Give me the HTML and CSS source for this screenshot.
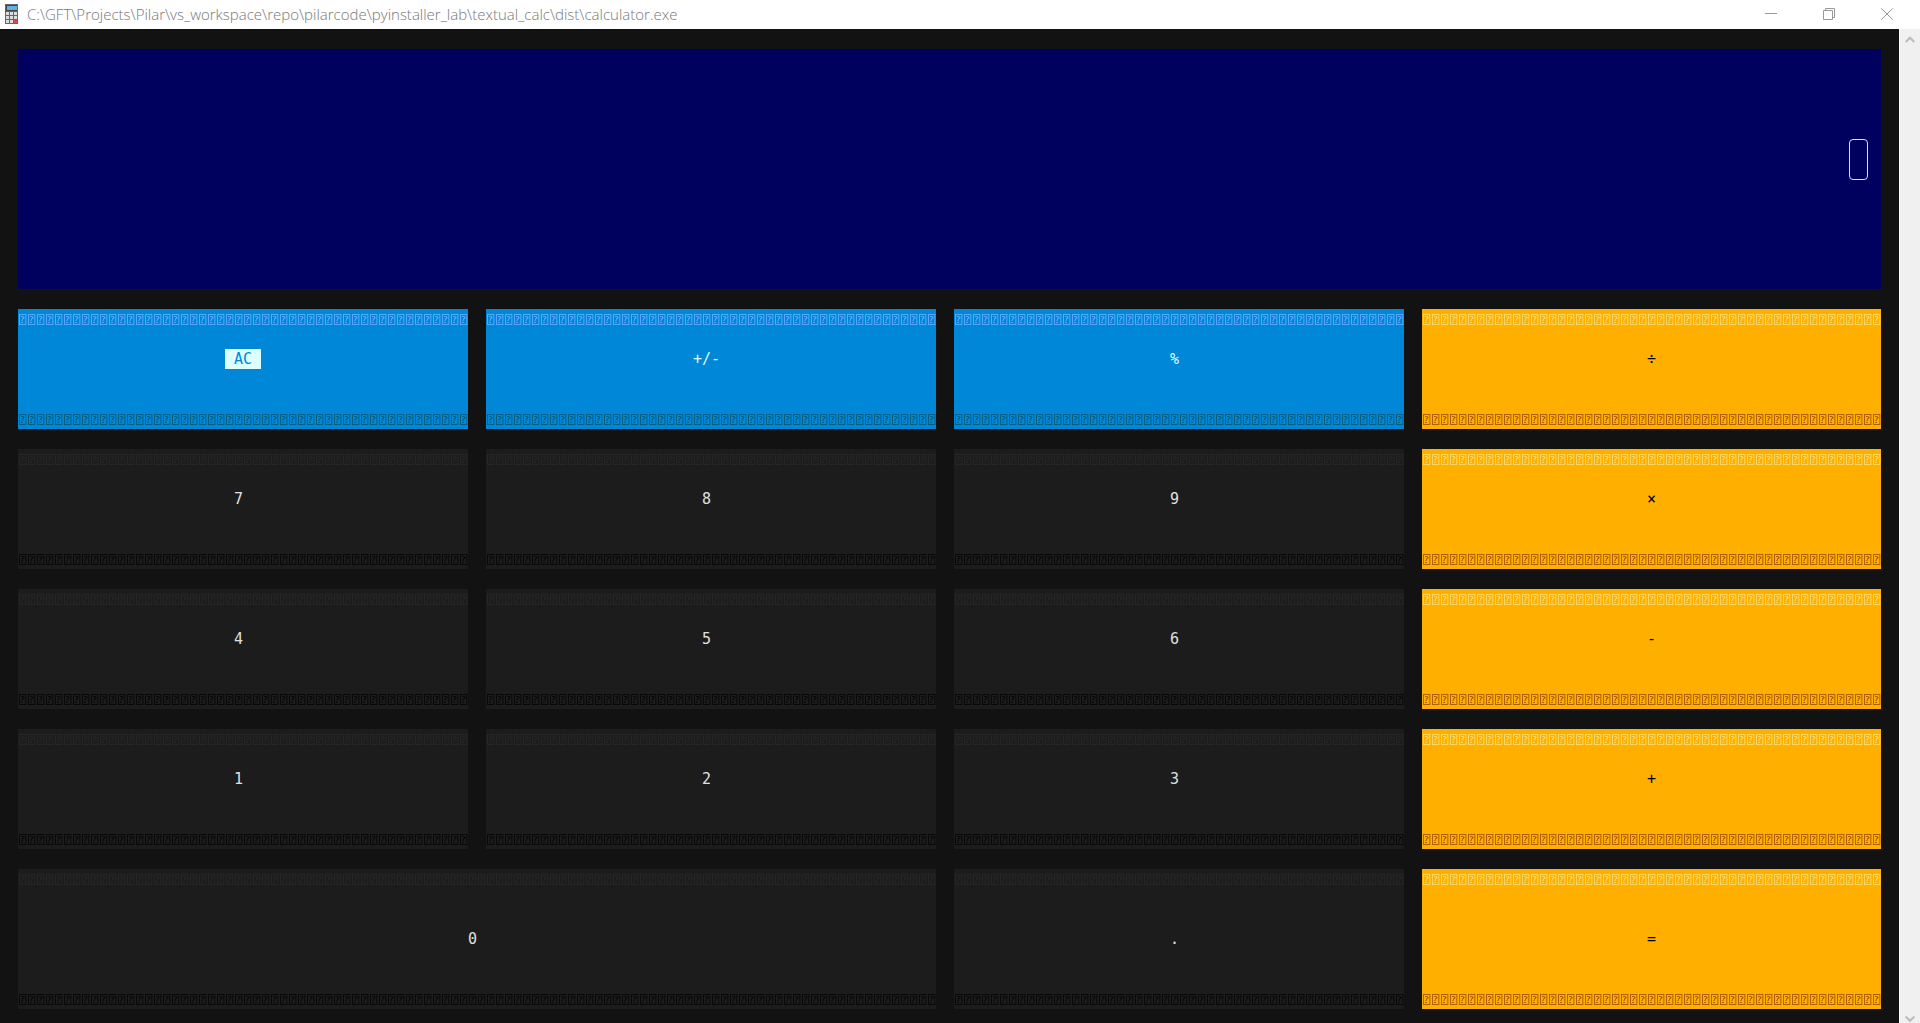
FILE: index.html
```html
<!DOCTYPE html>
<html lang="en">
<head>
<meta charset="utf-8">
<title>calculator.exe</title>
<link rel="stylesheet" href="styles.css">
</head>
<body>
<header class="titlebar">
  <svg class="app-icon" width="13" height="20" viewBox="0 0 13 20" aria-hidden="true">
    <rect width="13" height="20" fill="#666"/>
    <rect x="1" y="1" width="11" height="6" fill="#444"/>
    <rect x="2" y="2" width="10" height="4" fill="#62aee6"/>
    <path d="M1 8h3v3H1zM5 8h3v3H5zM9 8h3v3H9zM1 12h3v3H1zM5 12h3v3H5zM9 12h3v3H9zM1 16h3v3H1zM5 16h3v3H5z" fill="#ddd"/>
    <rect x="9" y="16" width="3" height="3" fill="#e04848"/>
  </svg>
  <span class="title">C:\GFT\Projects\Pilar\vs_workspace\repo\pilarcode\pyinstaller_lab\textual_calc\dist\calculator.exe</span>
  <div class="window-controls">
    <button class="window-button" type="button" aria-label="Minimize"><svg width="12" height="12" viewBox="0 0 12 12"><path d="M0 5.5h12"/></svg></button>
    <button class="window-button" type="button" aria-label="Restore"><svg width="12" height="12" viewBox="0 0 12 12"><path d="M.5 2.5h9v9h-9zM2.5 2.500v-2h9v9h-2"/></svg></button>
    <button class="window-button" type="button" aria-label="Close"><svg width="12" height="12" viewBox="0 0 12 12"><path d="M.3.3l11.400 11.400M11.700.3L.3 11.700"/></svg></button>
  </div>
</header>
<div class="terminal">
  <main class="calculator">
    <output class="display"><span class="digit" role="img" aria-label="0"></span></output>
    <button class="key key-blue key-focused" type="button"><span class="label">AC</span></button>
    <button class="key key-blue" type="button"><span class="label">+/-</span></button>
    <button class="key key-blue" type="button"><span class="label">%</span></button>
    <button class="key key-orange" type="button"><span class="label">÷</span></button>
    <button class="key" type="button"><span class="label">7</span></button>
    <button class="key" type="button"><span class="label">8</span></button>
    <button class="key" type="button"><span class="label">9</span></button>
    <button class="key key-orange" type="button"><span class="label">×</span></button>
    <button class="key" type="button"><span class="label">4</span></button>
    <button class="key" type="button"><span class="label">5</span></button>
    <button class="key" type="button"><span class="label">6</span></button>
    <button class="key key-orange" type="button"><span class="label">-</span></button>
    <button class="key" type="button"><span class="label">1</span></button>
    <button class="key" type="button"><span class="label">2</span></button>
    <button class="key" type="button"><span class="label">3</span></button>
    <button class="key key-orange" type="button"><span class="label">+</span></button>
    <button class="key key-tall key-wide" type="button"><span class="label">0</span></button>
    <button class="key key-tall" type="button"><span class="label">.</span></button>
    <button class="key key-tall key-orange" type="button"><span class="label">=</span></button>
  </main>
  <div class="scrollbar">
    <button class="scroll-arrow" type="button" aria-label="Scroll up"><svg width="10" height="8" viewBox="0 0 10 8"><path d="M.7 6L5 1.700 9.300 6"/></svg></button>
    <button class="scroll-arrow" type="button" aria-label="Scroll down"><svg width="10" height="8" viewBox="0 0 10 8"><path d="M.7 1.500L5 5.800 9.300 1.500"/></svg></button>
  </div>
</div>
</body>
</html>
```
FILE: styles.css
```css
* { box-sizing: border-box; }

body {
  margin: 0;
  min-height: 100vh;
  display: flex;
  flex-direction: column;
  background: #121212;
}

button {
  border: 0;
  padding: 0;
  font: inherit;
  background: none;
}

.titlebar {
  display: flex;
  align-items: center;
  height: 29px;
  padding: 0 4px 1px 5px;
  gap: 9px;
  background: #fff;
  color: #777;
  font: 300 15px/20px "Open Sans", "Noto Sans", sans-serif;
}

.title { flex: 1; white-space: nowrap; }

.window-controls { display: flex; }

.window-button {
  display: grid;
  place-items: center;
  width: 58px;
  height: 28px;
}

.window-button svg { fill: none; stroke: #999; }

.terminal { flex: 1; display: flex; }

.calculator {
  flex: 1;
  display: grid;
  grid-template-columns: 50fr 50fr 50fr 51fr;
  align-content: start;
  gap: 20px 18px;
  padding: 20px 18px 14px;
  font: 15px/20px "DejaVu Sans Mono", monospace;
}

.display {
  grid-column: 1 / -1;
  display: flex;
  justify-content: flex-end;
  padding: 90px 13px 109px;
  background: #00005f;
}

.digit {
  width: 19px;
  height: 41px;
  border: 1px solid #dfdfef;
  border-radius: 4px;
}

.key {
  --top: #262626;
  --bottom: #080808;
  display: flex;
  flex-direction: column;
  align-items: center;
  justify-content: space-between;
  height: 120px;
  padding: 5px 0 4px;
  background: #1c1c1c;
  color: #e0e0e0;
}

/* Edge rows repeat the missing-character glyph in every 9px cell. */
.key::before,
.key::after {
  content: "";
  align-self: stretch;
  height: 11px;
  background: var(--top);
  --glyph: url("data:image/svg+xml,%3Csvg xmlns='http://www.w3.org/2000/svg' width='9' height='11' shape-rendering='crispEdges'%3E%3Cpath d='M1 0h7v1H2v9h6v1H1zM3 2h2v1H3zM5 3h1v2H5zM4 5h1v1H4zM3 8h2v1H3z'/%3E%3Cpath d='M7 1h1v9H7zM5 2h1v1H5zM6 3h1v1H6zM4 4h1v1H4zM3 6h2v1H3z' opacity='.65'/%3E%3Cpath d='M8 0h1v11H8z' opacity='.35'/%3E%3C/svg%3E");
  -webkit-mask: var(--glyph) repeat-x;
  mask: var(--glyph) repeat-x;
}

.key::after { background: var(--bottom); }

.label { padding-right: 9px; margin-bottom: 21px; }

.key-tall { height: 140px; }
.key-tall .label { margin-bottom: 1px; }
.key-wide { grid-column: span 2; }

.key-blue {
  --top: #54a8ff;
  --bottom: #005f87;
  background: #0087d7;
  color: #dff;
}

.key-orange {
  --top: #ffd75f;
  --bottom: #af5f00;
  background: #ffaf00;
  color: #000;
}

.key-orange .label { padding-right: 0; }

.key-focused .label {
  padding: 0 9px;
  background: #dff;
  color: #0087d7;
}

.scrollbar {
  display: flex;
  flex-direction: column;
  justify-content: space-between;
  width: 21px;
  border-left: 1px solid #fff;
  background: #f0f0f0;
}

.scroll-arrow { display: grid; justify-content: center; padding-top: 7px; }
.scroll-arrow svg { fill: none; stroke: #bbb; stroke-width: 2; }
```
